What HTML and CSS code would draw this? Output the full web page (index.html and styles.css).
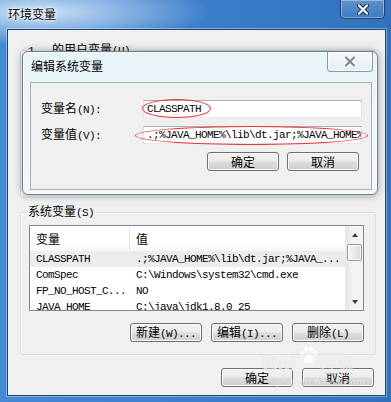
FILE: index.html
```html
<!DOCTYPE html>
<html lang="zh-CN">
<head>
    <meta charset="UTF-8">
    <meta name="viewport" content="width=device-width, initial-scale=1.0">
    <title>环境变量</title>
    <link rel="stylesheet" href="styles.css">
</head>
<body>
    <div class="window">
        <div class="titlebar">
            <span class="title">环境变量</span>
            <div class="win-close">
                <svg width="14" height="11" viewBox="0 0 14 11">
                    <path d="M3 1.5 L11 9.5 M11 1.5 L3 9.5" stroke="#1d2f4a" stroke-width="4" stroke-linecap="round"/>
                    <path d="M3 1.5 L11 9.5 M11 1.5 L3 9.5" stroke="#ffffff" stroke-width="2.2" stroke-linecap="round"/>
                </svg>
            </div>
        </div>

        <div class="client">
            <fieldset class="group user-group">
                <legend><span class="m">1&nbsp;&nbsp;&nbsp;</span>的用户变量<span class="m">(U)</span></legend>
            </fieldset>

            <fieldset class="group sys-group">
                <legend>系统变量<span class="m">(S)</span></legend>
                <div class="list">
                    <div class="list-body">
                        <div class="list-head">
                            <span class="col1">变量</span>
                            <span class="col2">值</span>
                        </div>
                        <div class="row selected">
                            <span class="col1 m">CLASSPATH</span>
                            <span class="col2 m">.;%JAVA_HOME%\lib\dt.jar;%JAVA_...</span>
                        </div>
                        <div class="row">
                            <span class="col1 m">ComSpec</span>
                            <span class="col2 m">C:\Windows\system32\cmd.exe</span>
                        </div>
                        <div class="row">
                            <span class="col1 m">FP_NO_HOST_C...</span>
                            <span class="col2 m">NO</span>
                        </div>
                        <div class="row">
                            <span class="col1 m">JAVA_HOME</span>
                            <span class="col2 m">C:\java\jdk1.8.0_25</span>
                        </div>
                    </div>
                    <div class="scrollbar">
                        <div class="sb-arrow"><span class="tri-up"></span></div>
                        <div class="sb-thumb"></div>
                        <div class="sb-track"></div>
                        <div class="sb-arrow"><span class="tri-down"></span></div>
                    </div>
                </div>
                <div class="actions">
                    <button class="btn">新建<span class="m">(W)...</span></button>
                    <button class="btn">编辑<span class="m">(I)...</span></button>
                    <button class="btn">删除<span class="m">(L)</span></button>
                </div>
            </fieldset>

            <div class="footer">
                <button class="btn">确定</button>
                <button class="btn">取消</button>
            </div>

            <!-- edit dialog sits on top of the main window -->
            <div class="dialog">
                <div class="dlg-titlebar">
                    <span class="dlg-title">编辑系统变量</span>
                    <div class="dlg-close">
                        <svg width="14" height="11" viewBox="0 0 14 11">
                            <path d="M3 1.5 L11 9.5 M11 1.5 L3 9.5" stroke="#ffffff" stroke-width="4" stroke-linecap="round"/>
                            <path d="M3 1.5 L11 9.5 M11 1.5 L3 9.5" stroke="#7d8891" stroke-width="2.2" stroke-linecap="round"/>
                        </svg>
                    </div>
                </div>
                <div class="dlg-client">
                    <div class="field">
                        <label class="field-label">变量名<span class="m">(N):</span></label>
                        <div class="input-wrap">
                            <div class="input m">CLASSPATH</div>
                            <span class="mark mark-name"></span>
                        </div>
                    </div>
                    <div class="field">
                        <label class="field-label">变量值<span class="m">(V):</span></label>
                        <div class="input-wrap">
                            <div class="input m">.;%JAVA_HOME%\lib\dt.jar;%JAVA_HOME%\lib\tools.jar</div>
                            <span class="mark mark-value"></span>
                        </div>
                    </div>
                    <div class="dlg-buttons">
                        <button class="btn">确定</button>
                        <button class="btn">取消</button>
                    </div>
                </div>
            </div>

            <div class="watermark">
                <div class="wm-logo">
                    <span class="wm-bai">Bai</span>
                    <svg width="20" height="18" viewBox="0 0 20 18">
                        <ellipse cx="4" cy="7" rx="2.2" ry="2.8" fill="#fff"/>
                        <ellipse cx="8" cy="3" rx="2.2" ry="2.8" fill="#fff"/>
                        <ellipse cx="13" cy="3" rx="2.2" ry="2.8" fill="#fff"/>
                        <ellipse cx="17" cy="7" rx="2.2" ry="2.8" fill="#fff"/>
                        <path d="M10.5 8 C7 8 5 13 6 15.5 C7 17.5 14 17.5 15 15.5 C16 13 14 8 10.5 8 Z" fill="#fff"/>
                    </svg>
                    <span class="wm-jy">经验</span>
                </div>
                <div class="wm-url">jingyan.baidu.com</div>
            </div>
        </div>
    </div>
</body>
</html>
```

FILE: styles.css
```css
body {
    margin: 0;
    width: 391px;
    height: 402px;
    overflow: hidden;
    font-family: "Noto Sans CJK SC", sans-serif;
    font-size: 12px;
    line-height: 14px;
    color: #000;
}
.m {
    font-family: "Liberation Mono", monospace;
    font-size: 11px;
    letter-spacing: -0.6px;
}
.window {
    display: flex;
    flex-direction: column;
    height: 402px;
    background:
        radial-gradient(ellipse 170px 34px at 40px 12px, rgba(214,231,248,0.95), rgba(214,231,248,0)),
        linear-gradient(to right, #4489d5, #3d80cc 45%, #3271bc 100%);
}
.titlebar {
    height: 29px;
    display: flex;
    justify-content: space-between;
    align-items: flex-start;
    padding: 0 6px 0 8px;
}
.title {
    padding-top: 7px;
    text-shadow: 0 0 5px #fff, 0 0 3px #fff, 0 0 2px #fff;
}
.win-close {
    width: 45px;
    height: 19px;
    box-sizing: border-box;
    border: 1px solid rgba(18, 38, 72, 0.75);
    border-top: none;
    border-radius: 0 0 5px 5px;
    background: linear-gradient(rgba(255,255,255,0.22), rgba(255,255,255,0.06));
    box-shadow: inset 0 0 0 1px rgba(255,255,255,0.35);
    display: flex;
    justify-content: center;
    align-items: center;
}
.client {
    position: relative;
    flex: 1;
    margin: 0 5px 6px 7px;
    background: #f0f0f0;
    border: 1px solid #24446c;
    box-shadow: 0 0 0 1px rgba(255,255,255,0.35);
}
.group {
    margin: 0 0 0 12px;
    width: 356px;
    box-sizing: border-box;
    border: 1px solid #d5dfe5;
    border-radius: 3px;
    box-shadow: inset 1px 1px 0 #fff;
    padding: 5px 11px 12px 8px;
}
.group legend {
    padding: 0 2px;
    margin-left: -3px;
}
.user-group {
    margin-top: 12px;
    height: 156px;
}
.sys-group {
    margin-top: 6px;
}
.list {
    display: flex;
    height: 86px;
    box-sizing: border-box;
    border: 1px solid #828790;
    background: #fff;
}
.list-body {
    flex: 1;
    overflow: hidden;
}
.list-head {
    display: flex;
    height: 25px;
    align-items: center;
    background: linear-gradient(#ffffff, #ffffff 60%, #f7f8f9);
}
.list-head .col1 {
    align-self: stretch;
    display: flex;
    align-items: center;
    width: 93px;
    border-right: 1px solid #e5e5e5;
}
.col1 {
    width: 94px;
    padding-left: 6px;
    flex-shrink: 0;
}
.col2 {
    padding-left: 6px;
    white-space: nowrap;
}
.row {
    display: flex;
    height: 16px;
    line-height: 16px;
    white-space: nowrap;
}
.row.selected {
    background: #ececec;
}
.scrollbar {
    width: 17px;
    display: flex;
    flex-direction: column;
    background: linear-gradient(to right, #e6e6e6, #f4f4f4 40%, #f4f4f4);
    border-left: 1px solid #e8e8e8;
}
.sb-arrow {
    height: 17px;
    display: flex;
    justify-content: center;
    align-items: center;
}
.tri-up, .tri-down {
    width: 0;
    height: 0;
    border-left: 3px solid transparent;
    border-right: 3px solid transparent;
}
.tri-up {
    border-bottom: 4px solid #3c3c3c;
}
.tri-down {
    border-top: 4px solid #3c3c3c;
}
.sb-thumb {
    height: 15px;
    margin: 1px 1px 0;
    border: 1px solid #9a9a9a;
    border-radius: 2px;
    background: linear-gradient(to right, #f6f6f6, #e6e6e6 60%, #dcdcdc);
    box-shadow: inset 0 0 0 1px #fbfbfb;
}
.sb-track {
    flex: 1;
}
.actions {
    display: flex;
    justify-content: flex-end;
    gap: 9px;
    margin-top: 12px;
}
.btn {
    width: 72px;
    height: 19px;
    padding: 0;
    box-sizing: border-box;
    border: 1px solid #707070;
    border-radius: 3px;
    background: linear-gradient(#f2f2f2 0%, #ebebeb 48%, #dddddd 52%, #cfcfcf 100%);
    box-shadow: inset 0 0 0 1px #fbfbfb;
    font-family: "Noto Sans CJK SC", sans-serif;
    font-size: 12px;
    line-height: 16px;
    color: #000;
}
.footer {
    display: flex;
    justify-content: flex-end;
    gap: 9px;
    margin-top: 13px;
    padding-right: 11px;
}
.dialog {
    position: absolute;
    left: 14px;
    top: 21px;
    width: 356px;
    height: 144px;
    box-sizing: border-box;
    border: 1px solid #6f7d8a;
    border-radius: 6px;
    background: linear-gradient(#e6f3f7, #eef7f9 40%, #f3f8fa);
    box-shadow: 0 0 9px rgba(0,0,0,0.35), inset 0 0 0 1px rgba(255,255,255,0.8);
    display: flex;
    flex-direction: column;
}
.dlg-titlebar {
    height: 30px;
    display: flex;
    justify-content: space-between;
    align-items: flex-start;
    padding: 0 4px 0 8px;
}
.dlg-title {
    padding-top: 7px;
}
.dlg-close {
    width: 46px;
    height: 20px;
    box-sizing: border-box;
    border: 1px solid #8a98a5;
    border-top: none;
    border-radius: 0 0 4px 4px;
    background: linear-gradient(#f4f9fb, #e4eef2);
    box-shadow: inset 0 0 0 1px rgba(255,255,255,0.8);
    display: flex;
    justify-content: center;
    align-items: center;
}
.dlg-client {
    flex: 1;
    margin: 0 5px 4px 7px;
    border: 1px solid #a3b0bb;
    background: #f0f0f0;
    padding: 17px 9px 0 10px;
}
.field {
    display: flex;
    align-items: center;
    height: 18px;
    margin-bottom: 8px;
}
.field-label {
    width: 102px;
}
.input-wrap {
    position: relative;
}
.input {
    width: 219px;
    height: 18px;
    box-sizing: border-box;
    border: 1px solid;
    border-color: #abadb3 #dbdfe6 #e3e9ef #e2e3ea;
    background: #fff;
    padding-left: 3px;
    line-height: 16px;
    white-space: nowrap;
    overflow: hidden;
}
.mark {
    position: absolute;
    box-sizing: border-box;
    border: 1.5px solid #e3383a;
    border-radius: 50%;
}
.mark-name {
    left: -1px;
    top: -1px;
    width: 69px;
    height: 19px;
}
.mark-value {
    left: -8px;
    top: 0;
    width: 233px;
    height: 19px;
}
.dlg-buttons {
    display: flex;
    justify-content: flex-end;
    gap: 8px;
    margin-top: 6px;
    margin-right: 3px;
}
.watermark {
    position: absolute;
    left: 254px;
    top: 316px;
    color: rgba(255,255,255,0.7);
    text-shadow: 0 0 1px rgba(0,0,0,0.15);
    pointer-events: none;
}
.wm-logo {
    display: flex;
    align-items: flex-end;
    gap: 2px;
}
.wm-logo svg {
    opacity: 0.75;
    margin-bottom: 12px;
}
.wm-bai {
    font-family: "Liberation Sans", sans-serif;
    font-weight: bold;
    font-size: 22px;
    line-height: 24px;
}
.wm-jy {
    font-size: 17px;
    line-height: 22px;
    font-weight: bold;
}
.wm-url {
    font-family: "Liberation Sans", sans-serif;
    font-size: 10px;
    margin-left: 14px;
    letter-spacing: 0.5px;
}
```
